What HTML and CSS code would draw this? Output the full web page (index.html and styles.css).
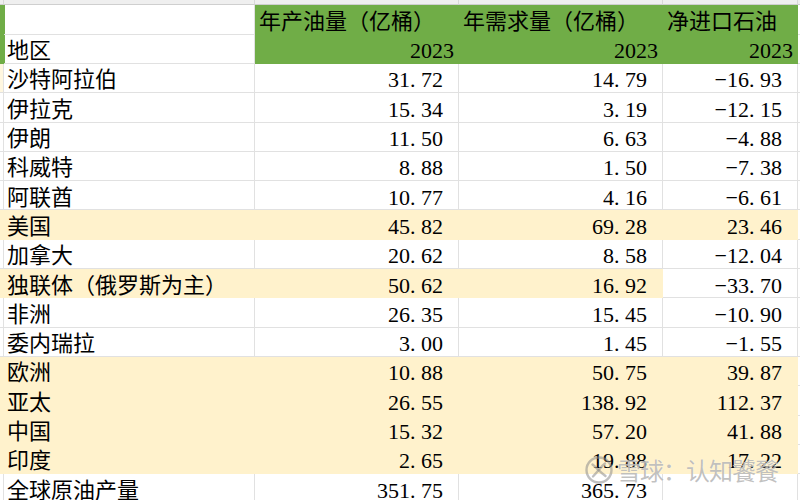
FILE: index.html
```html
<!DOCTYPE html>
<html lang="zh-CN">
<head>
<meta charset="utf-8">
<title>原油产量与需求</title>
<link rel="stylesheet" href="styles.css">
</head>
<body>
<div class="sheet">
  <div class="c top"></div><div class="c top"></div><div class="c top"></div><div class="c top"></div><div class="c top"></div><div class="c top end"></div>

  <div class="c lead g"></div><div class="c"></div><div class="c g">年产油量（亿桶）</div><div class="c g">年需求量（亿桶）</div><div class="c g">净进口石油</div><div class="c end"></div>
  <div class="c lead g"></div><div class="c">地区</div><div class="c g yr">2023</div><div class="c g yr">2023</div><div class="c g yr">2023</div><div class="c end"></div>

  <div class="c lead tint"></div><div class="c">沙特阿拉伯</div><div class="c num">31<span class="p">.</span>72</div><div class="c num">14<span class="p">.</span>79</div><div class="c num">−16<span class="p">.</span>93</div><div class="c end"></div>
  <div class="c lead"></div><div class="c">伊拉克</div><div class="c num">15<span class="p">.</span>34</div><div class="c num">3<span class="p">.</span>19</div><div class="c num">−12<span class="p">.</span>15</div><div class="c end"></div>
  <div class="c lead"></div><div class="c">伊朗</div><div class="c num">11<span class="p">.</span>50</div><div class="c num">6<span class="p">.</span>63</div><div class="c num">−4<span class="p">.</span>88</div><div class="c end"></div>
  <div class="c lead"></div><div class="c">科威特</div><div class="c num">8<span class="p">.</span>88</div><div class="c num">1<span class="p">.</span>50</div><div class="c num">−7<span class="p">.</span>38</div><div class="c end"></div>
  <div class="c lead"></div><div class="c">阿联酋</div><div class="c num">10<span class="p">.</span>77</div><div class="c num">4<span class="p">.</span>16</div><div class="c num">−6<span class="p">.</span>61</div><div class="c end"></div>
  <div class="c lead hl"></div><div class="c hl">美国</div><div class="c num hl">45<span class="p">.</span>82</div><div class="c num hl">69<span class="p">.</span>28</div><div class="c num hl">23<span class="p">.</span>46</div><div class="c end"></div>
  <div class="c lead"></div><div class="c">加拿大</div><div class="c num">20<span class="p">.</span>62</div><div class="c num">8<span class="p">.</span>58</div><div class="c num">−12<span class="p">.</span>04</div><div class="c end"></div>
  <div class="c lead hl"></div><div class="c hl">独联体（俄罗斯为主）</div><div class="c num hl">50<span class="p">.</span>62</div><div class="c num hl">16<span class="p">.</span>92</div><div class="c num">−33<span class="p">.</span>70</div><div class="c end"></div>
  <div class="c lead"></div><div class="c">非洲</div><div class="c num">26<span class="p">.</span>35</div><div class="c num">15<span class="p">.</span>45</div><div class="c num">−10<span class="p">.</span>90</div><div class="c end"></div>
  <div class="c lead"></div><div class="c">委内瑞拉</div><div class="c num">3<span class="p">.</span>00</div><div class="c num">1<span class="p">.</span>45</div><div class="c num">−1<span class="p">.</span>55</div><div class="c end"></div>
  <div class="c lead hl"></div><div class="c hl">欧洲</div><div class="c num hl">10<span class="p">.</span>88</div><div class="c num hl">50<span class="p">.</span>75</div><div class="c num hl">39<span class="p">.</span>87</div><div class="c end"></div>
  <div class="c lead hl"></div><div class="c hl">亚太</div><div class="c num hl">26<span class="p">.</span>55</div><div class="c num hl">138<span class="p">.</span>92</div><div class="c num hl">112<span class="p">.</span>37</div><div class="c end"></div>
  <div class="c lead hl"></div><div class="c hl">中国</div><div class="c num hl">15<span class="p">.</span>32</div><div class="c num hl">57<span class="p">.</span>20</div><div class="c num hl">41<span class="p">.</span>88</div><div class="c end"></div>
  <div class="c lead hl"></div><div class="c hl">印度</div><div class="c num hl">2<span class="p">.</span>65</div><div class="c num hl">19<span class="p">.</span>88</div><div class="c num hl">17<span class="p">.</span>22</div><div class="c end"></div>
  <div class="c lead"></div><div class="c">全球原油产量</div><div class="c num">351<span class="p">.</span>75</div><div class="c num">365<span class="p">.</span>73</div><div class="c num"></div><div class="c end"></div>

  <div class="mark">
    <svg class="logo" width="30" height="30" viewBox="0 0 30 30" aria-hidden="true">
      <circle cx="15" cy="15" r="12.5" fill="none" stroke="currentColor" stroke-width="2.4"/>
      <path d="M8.5 9.5 C12 12 15 16 21.5 21" fill="none" stroke="currentColor" stroke-width="2.4" stroke-linecap="round"/>
      <path d="M21 8.5 C17.5 11 14.5 16 9 21.5" fill="none" stroke="currentColor" stroke-width="2.4" stroke-linecap="round"/>
    </svg>
    <span class="mark-text">雪球：认知饕餮</span>
  </div>
</div>
</body>
</html>
```
FILE: styles.css
```css
html, body {
  margin: 0;
  padding: 0;
  background: #ffffff;
}

.sheet {
  position: relative;
  display: grid;
  grid-template-columns: 4px 251px 204px 204px 135px 2px;
  grid-template-rows: 5.4px;
  grid-auto-rows: 29.3px;
  width: 800px;
  height: 500px;
  overflow: hidden;
  font-family: "Liberation Serif", "Noto Sans CJK SC", serif;
  font-size: 22px;
  color: #000000;
}

.c {
  box-sizing: border-box;
  border-right: 1px solid #e1e1e1;
  border-bottom: 1px solid #e1e1e1;
  padding: 4.5px 4px 0 3px;
  line-height: 24px;
  white-space: nowrap;
  overflow: hidden;
}

.top {
  padding: 0;
  background: #efefef;
  border-right-color: #d8d8d8;
  border-bottom-color: #cfcfcf;
}

.lead {
  padding: 0;
}

.end {
  padding: 0;
  border-right: none;
}

.g {
  background: #70ad47;
  border-color: #70ad47;
  padding-left: 4px;
}

.hl {
  background: #fff2cc;
  border-color: #fff2cc;
}

.tint {
  background: #fff7e0;
}

.num {
  text-align: right;
  padding-right: 15px;
}

.yr {
  text-align: right;
  padding-right: 4px;
}

.p {
  display: inline-block;
  width: 11px;
  text-align: left;
}

.mark {
  position: absolute;
  left: 584px;
  top: 454px;
  display: flex;
  align-items: center;
  gap: 3px;
  color: rgba(140, 140, 140, 0.55);
}

.logo {
  display: block;
}

.mark-text {
  font-family: "Noto Sans CJK SC", sans-serif;
  font-size: 24px;
  line-height: 32px;
  letter-spacing: -1px;
  text-shadow: 0 0 1px rgba(255, 255, 255, 0.9);
}
```
